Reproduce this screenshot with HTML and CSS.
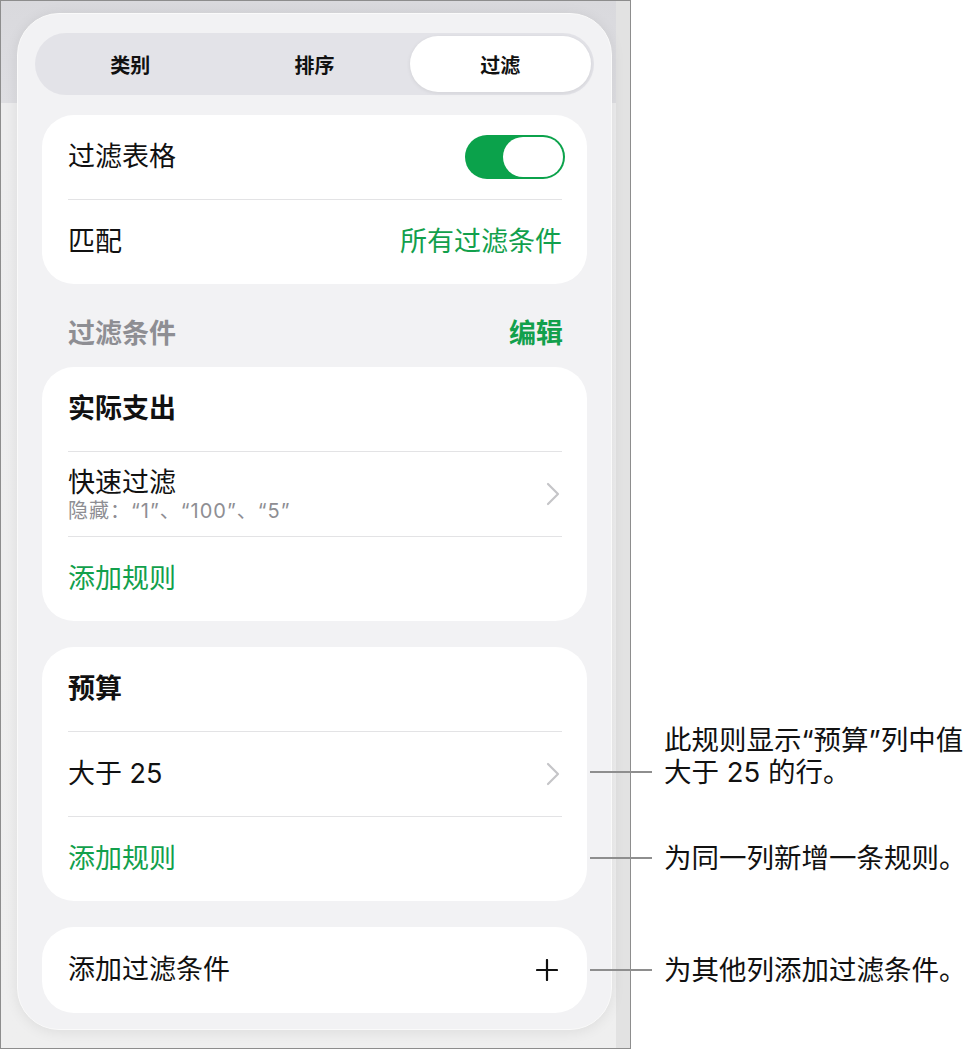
FILE: index.html
```html
<!DOCTYPE html>
<html>
<head>
  <meta charset="utf-8">
  <meta name="viewport" content="width=device-width, initial-scale=1">
  <title>过滤</title>
  <link rel="stylesheet" href="styles.css">
</head>
<body>
<div class="page">
  <div class="frame">
    <div class="panel">
      <div class="segmented">
        <div class="seg">类别</div>
        <div class="seg">排序</div>
        <div class="seg seg--active">过滤</div>
      </div>

      <div class="card">
        <div class="row">
          <span>过滤表格</span>
          <span class="toggle"><span class="toggle__knob"></span></span>
        </div>
        <div class="row">
          <span>匹配</span>
          <span class="green">所有过滤条件</span>
        </div>
      </div>

      <div class="section-head">
        <span>过滤条件</span>
        <span class="green">编辑</span>
      </div>

      <div class="card">
        <div class="row row--title">实际支出</div>
        <div class="row">
          <div class="row__text">
            <div>快速过滤</div>
            <div class="sub">隐藏：“1”、“100”、“5”</div>
          </div>
          <svg class="chevron" width="14" height="24" viewBox="0 0 14 24"><path d="M2 2 L12 12 L2 22" fill="none" stroke="#c5c5c8" stroke-width="2.2" stroke-linecap="round" stroke-linejoin="round"/></svg>
        </div>
        <div class="row"><span class="green">添加规则</span></div>
      </div>

      <div class="card">
        <div class="row row--title">预算</div>
        <div class="row">
          <span>大于 25</span>
          <svg class="chevron" width="14" height="24" viewBox="0 0 14 24"><path d="M2 2 L12 12 L2 22" fill="none" stroke="#c5c5c8" stroke-width="2.2" stroke-linecap="round" stroke-linejoin="round"/></svg>
        </div>
        <div class="row"><span class="green">添加规则</span></div>
      </div>

      <div class="card">
        <div class="row row--tall">
          <span>添加过滤条件</span>
          <svg class="plus" width="22" height="22" viewBox="0 0 22 22"><path d="M11 1 V21 M1 11 H21" stroke="#111" stroke-width="2.2" stroke-linecap="round"/></svg>
        </div>
      </div>
    </div>
  </div>

  <div class="callout callout--rule">
    <span class="callout__line"></span>
    <span class="callout__text">此规则显示“预算”列中值<br>大于 25 的行。</span>
  </div>
  <div class="callout callout--add">
    <span class="callout__line"></span>
    <span class="callout__text">为同一列新增一条规则。</span>
  </div>
  <div class="callout callout--filter">
    <span class="callout__line"></span>
    <span class="callout__text">为其他列添加过滤条件。</span>
  </div>
</div>
</body>
</html>
```

FILE: styles.css
```css
* {
	box-sizing: border-box;
}

body {
	margin: 0;
	background: #fff;
	font-family: Inter, "Noto Sans CJK SC", sans-serif;
	color: #111;
}

.page {
	position: relative;
	width: 971px;
	height: 1051px;
}

.frame {
	width: 631px;
	height: 1049px;
	border: 1px solid #8d8d8d;
	background:
		linear-gradient(to left, #e2e2e2 0, #e2e2e2 14px, transparent 14px),
		linear-gradient(#d9d9dd 0, #dedee2 102px, #ededee 102px, #efefef 100%);
	padding: 12px 0 0 16px;
}

.panel {
	width: 595px;
	height: 1017px;
	border-radius: 42px;
	background: #f2f2f4;
	border: 1px solid #fafafa;
	box-shadow: 0 2px 14px rgba(0, 0, 0, 0.08);
	padding: 19px 17px 16px;
}

.segmented {
	display: grid;
	grid-template-columns: 1fr 1fr 1fr;
	height: 62px;
	padding: 3px;
	border-radius: 31px;
	background: #e3e3e8;
	margin-bottom: 20px;
}

.seg {
	display: flex;
	align-items: center;
	justify-content: center;
	font-size: 20px;
	font-weight: 600;
	color: #111;
	border-radius: 28px;
}

.seg--active {
	background: #fff;
	box-shadow: 0 1px 4px rgba(0, 0, 0, 0.08);
	margin-left: 3px;
}

.card {
	margin: 0 7px;
	background: #fff;
	border-radius: 32px;
	padding: 0 25px 0 26px;
}

.card + .card {
	margin-top: 26px;
}

.row {
	display: flex;
	align-items: center;
	justify-content: space-between;
	height: 84px;
	font-size: 27px;
	line-height: 34px;
}

.row + .row {
	height: 85px;
	border-top: 1px solid #e3e3e5;
}

.row--title {
	font-weight: 700;
}

.row--tall {
	height: 86px;
}

.row__text {
	line-height: 30px;
	padding-top: 3px;
}

.sub {
	font-size: 20px;
	line-height: 26px;
	letter-spacing: 1px;
	color: #8e8e93;
}

.green {
	color: #12a04c;
}

.section-head {
	display: flex;
	align-items: flex-end;
	justify-content: space-between;
	height: 83px;
	padding: 0 31px 16px 33px;
	font-size: 27px;
	line-height: 34px;
	font-weight: 700;
	color: #8e8e93;
}

.toggle {
	display: flex;
	justify-content: flex-end;
	width: 100px;
	height: 44px;
	margin-right: -3px;
	padding: 2px;
	border-radius: 22px;
	background: #0ba24b;
}

.toggle__knob {
	width: 60px;
	height: 40px;
	border-radius: 20px;
	background: #fff;
}

.chevron {
	margin-right: 2px;
}

.plus {
	margin-right: 4px;
}

.callout {
	position: absolute;
	left: 590px;
	display: flex;
	align-items: center;
}

.callout__line {
	width: 62px;
	height: 2px;
	background: #8e8e8e;
	margin-right: 12px;
}

.callout__text {
	font-size: 27.5px;
	line-height: 32px;
	color: #111;
	white-space: nowrap;
}

.callout--rule {
	top: 724px;
	align-items: flex-end;
}

.callout--rule .callout__line {
	margin-bottom: 15px;
}

.callout--add {
	top: 842px;
}

.callout--filter {
	top: 954px;
}
```
